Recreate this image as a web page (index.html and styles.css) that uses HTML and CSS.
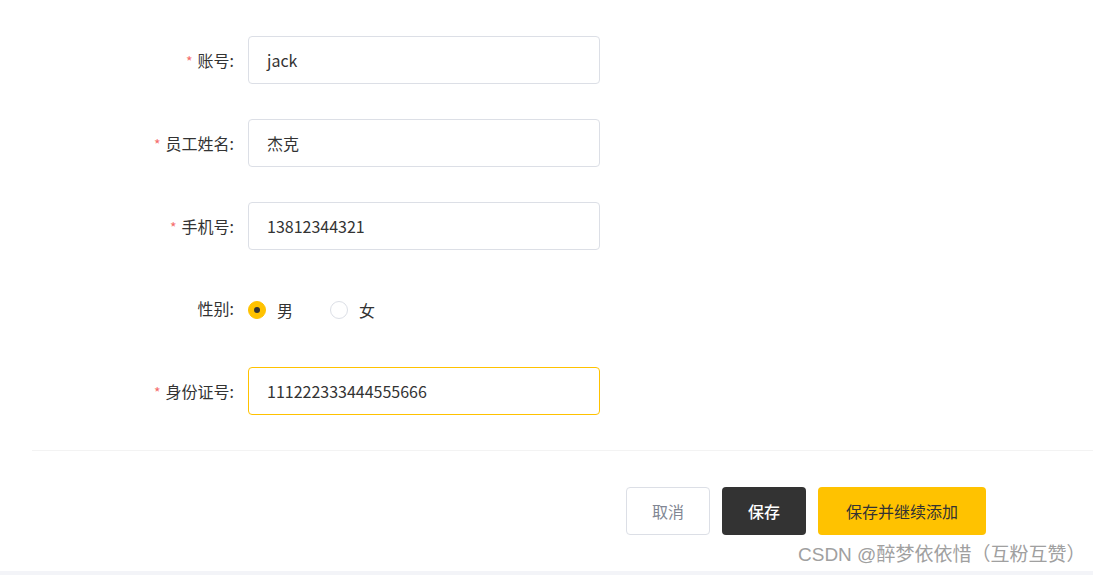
FILE: index.html
```html
<!DOCTYPE html>
<html lang="zh">
<head>
<meta charset="utf-8">
<link rel="stylesheet" href="styles.css">
</head>
<body>
<div class="page">
  <form class="form">
    <div class="row">
      <label class="label"><span class="req">*</span>账号:</label>
      <div class="input">jack</div>
    </div>
    <div class="row">
      <label class="label"><span class="req">*</span>员工姓名:</label>
      <div class="input">杰克</div>
    </div>
    <div class="row">
      <label class="label"><span class="req">*</span>手机号:</label>
      <div class="input">13812344321</div>
    </div>
    <div class="row">
      <label class="label">性别:</label>
      <div class="radios">
        <span class="radio checked"><span class="dot"></span></span><span class="rtext">男</span>
        <span class="radio"></span><span class="rtext">女</span>
      </div>
    </div>
    <div class="row">
      <label class="label"><span class="req">*</span>身份证号:</label>
      <div class="input focus">111222333444555666</div>
    </div>
  </form>
  <div class="footer">
    <button class="btn cancel" type="button">取消</button>
    <button class="btn save" type="button">保存</button>
    <button class="btn more" type="button">保存并继续添加</button>
  </div>
  <div class="watermark">CSDN @醉梦依依惜（互粉互赞）</div>
</div>
<div class="strip"></div>
</body>
</html>
```
FILE: styles.css
```css
html, body {
  margin: 0;
  padding: 0;
  background: #fff;
}
body {
  font-family: "Noto Sans CJK SC", "Noto Sans", sans-serif;
  color: #333;
  width: 1093px;
  height: 575px;
  overflow: hidden;
  display: flex;
  flex-direction: column;
}
.page {
  flex: 1;
  padding-top: 36px;
  padding-left: 32px;
  display: flex;
  flex-direction: column;
}
.form {
  display: flex;
  flex-direction: column;
  gap: 34.75px;
}
.row {
  display: flex;
  align-items: center;
  height: 48px;
}
.label {
  width: 216px;
  padding-right: 14px;
  text-align: right;
  font-size: 16px;
  color: #333;
  box-sizing: border-box;
}
.req {
  color: #f56c6c;
  margin-right: 5px;
  font-size: 14px;
}
.input {
  width: 352px;
  height: 48px;
  box-sizing: border-box;
  border: 1px solid #dcdfe6;
  border-radius: 4px;
  padding: 0 18px;
  display: flex;
  align-items: center;
  font-size: 16px;
  color: #333;
}
.input.focus {
  border-color: #ffc200;
}
.radios {
  display: flex;
  align-items: center;
  padding-top: 4px;
}
.radio {
  width: 18px;
  height: 18px;
  border-radius: 50%;
  border: 1px solid #dcdfe6;
  box-sizing: border-box;
  display: flex;
  align-items: center;
  justify-content: center;
}
.radio.checked {
  background: #ffc200;
  border-color: #ffc200;
}
.dot {
  width: 6px;
  height: 6px;
  border-radius: 50%;
  background: #333;
}
.rtext {
  font-size: 16px;
  margin-left: 11px;
  margin-right: 37px;
}
.footer {
  margin-top: 35px;
  border-top: 1px solid #f3f3f3;
  padding-top: 36px;
  display: flex;
  gap: 12px;
  padding-left: 594px;
}
.btn {
  height: 48px;
  border-radius: 4px;
  font-family: "Noto Sans CJK SC", "Noto Sans", sans-serif;
  font-size: 16px;
  border: 1px solid transparent;
  padding: 0;
  cursor: pointer;
}
.cancel {
  width: 84px;
  background: #fff;
  border-color: #dcdfe6;
  color: #818693;
}
.save {
  width: 84px;
  background: #333;
  color: #fff;
  font-weight: 500;
}
.more {
  width: 168px;
  background: #ffc200;
  color: #333;
}
.watermark {
  margin-top: 4px;
  margin-left: 766px;
  font-family: "Liberation Sans", "Noto Sans CJK SC", sans-serif;
  font-size: 19px;
  color: #a0a0a0;
}
.strip {
  height: 4px;
  background: #f3f4f8;
}
```
